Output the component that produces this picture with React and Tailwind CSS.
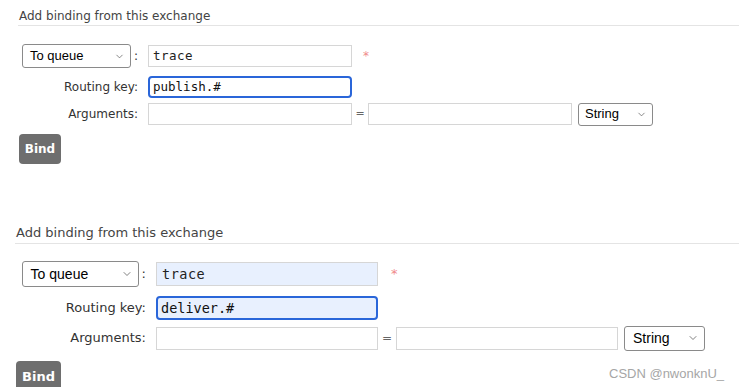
import { ChevronDown } from 'lucide-react';

/**
 * Two stacked "Add binding" forms (management UI screenshots)
 * The second one is a slightly larger capture, so sizes come from a config.
 */
const small = {
  wrap: 'pl-[19px] pt-[9px]',
  title: 'text-[12px] h-[17px] leading-[14px] border-b border-[#e4e4e4] -ml-[1px] pl-[1px]',
  form: 'pt-[18px]',
  labelCell: 'w-[119px] text-[12px]',
  gapToInput: 'ml-[10px]',
  select: 'w-[109px] h-[24px] text-[13px] pl-[7px] pr-[5px]',
  chevron: 11,
  input: 'w-[204px] h-[22px] text-[12.5px] px-[4px]',
  blank: 'w-[204px] h-[22px]',
  focusInput: 'w-[204px] h-[22px] text-[12.5px] px-[3px]',
  star: 'ml-[11px] text-[12px]',
  row1: 'h-[24px]',
  row2: 'h-[22px] mt-[8px]',
  row3: 'h-[22px] mt-[5px]',
  eq: 'w-[16px] text-[11px]',
  typeSelect: 'ml-[6px] w-[75px] h-[23px] text-[13px] pl-[6px] pr-[5px]',
  bind: 'mt-[9px] w-[42px] h-[30px] text-[12px]',
};

const large = {
  wrap: 'pl-[16px] pt-[61px]',
  title: 'text-[13px] h-[19px] leading-[16px] border-b border-[#e4e4e4] -ml-[1px] pl-[1px]',
  form: 'pt-[17px]',
  labelCell: 'w-[130px] text-[13px]',
  gapToInput: 'ml-[10px]',
  select: 'w-[117px] h-[26px] text-[14px] pl-[8px] pr-[5px]',
  chevron: 12,
  input: 'w-[222px] h-[24px] text-[13.5px] px-[5px] bg-[#e8f0fe]',
  blank: 'w-[222px] h-[23px]',
  focusInput: 'w-[222px] h-[24px] text-[13.5px] px-[3px] bg-[#e8f0fe]',
  star: 'ml-[13px] text-[13px]',
  row1: 'h-[26px]',
  row2: 'h-[24px] mt-[9px]',
  row3: 'h-[24px] mt-[6px]',
  eq: 'w-[18px] text-[12px]',
  typeSelect: 'ml-[6px] w-[81px] h-[25px] text-[14px] pl-[8px] pr-[5px]',
  bind: 'mt-[11px] w-[45px] h-[32px] text-[13px]',
};

const sans = 'font-["DejaVu_Sans",Verdana,sans-serif]';
const arial = 'font-["Liberation_Sans",Arial,sans-serif]';
const mono = 'font-["DejaVu_Sans_Mono",Menlo,monospace]';

function FakeSelect({ className, value, chevron }) {
  return (
    <div className={`flex items-center justify-between border border-[#8a8a8a] rounded-[3px] bg-white text-black ${arial} ${className}`}>
      <span>{value}</span>
      <ChevronDown size={chevron} strokeWidth={1.5} className="text-[#555]" />
    </div>
  );
}

function BindingForm({ c, routingKey }) {
  return (
    <div className={c.wrap}>
      <div className={`text-[#444] ${sans} ${c.title}`}>Add binding from this exchange</div>

      <div className={c.form}>
        {/* Destination row */}
        <div className={`flex items-center ${c.row1}`}>
          <div className={`flex items-center justify-end text-[#333] ${sans} ${c.labelCell}`}>
            <FakeSelect className={c.select} value="To queue" chevron={c.chevron} />
            <span className="ml-[3px]">:</span>
          </div>
          <div className={`flex items-center border border-[#d6d6d6] text-[#222] ${mono} ${c.gapToInput} ${c.input}`}>
            <span className="tracking-[0.5px]">trace</span>
          </div>
          <span className={`text-[#f08a8a] ${sans} ${c.star}`}>*</span>
        </div>

        {/* Routing key row */}
        <div className={`flex items-center ${c.row2}`}>
          <div className={`text-right text-[#333] ${sans} ${c.labelCell}`}>Routing key:</div>
          <div className={`flex items-center border-2 border-[#2a66d9] rounded-[4px] text-[#111] ${mono} ${c.gapToInput} ${c.focusInput}`}>
            <span>{routingKey}</span>
          </div>
        </div>

        {/* Arguments row */}
        <div className={`flex items-center ${c.row3}`}>
          <div className={`text-right text-[#333] ${sans} ${c.labelCell}`}>Arguments:</div>
          <div className={`border border-[#d6d6d6] bg-white ${c.gapToInput} ${c.blank}`} />
          <span className={`text-center text-[#666] ${sans} ${c.eq}`}>=</span>
          <div className={`border border-[#d6d6d6] bg-white ${c.blank}`} />
          <FakeSelect className={c.typeSelect} value="String" chevron={c.chevron} />
        </div>

        <button className={`flex items-center justify-center rounded-[4px] bg-[#6e6e6e] text-white font-semibold ${sans} ${c.bind}`}>
          Bind
        </button>
      </div>
    </div>
  );
}

export default function App() {
  return (
    <div className="relative w-[739px] h-[387px] overflow-hidden bg-white">
      <BindingForm c={small} routingKey="publish.#" />
      <BindingForm c={large} routingKey="deliver.#" />
      {/* watermark */}
      <div className={`absolute left-[609px] top-[364px] text-[13px] text-[#a6a6a6] ${arial}`}>CSDN @nwonknU_</div>
    </div>
  );
}
